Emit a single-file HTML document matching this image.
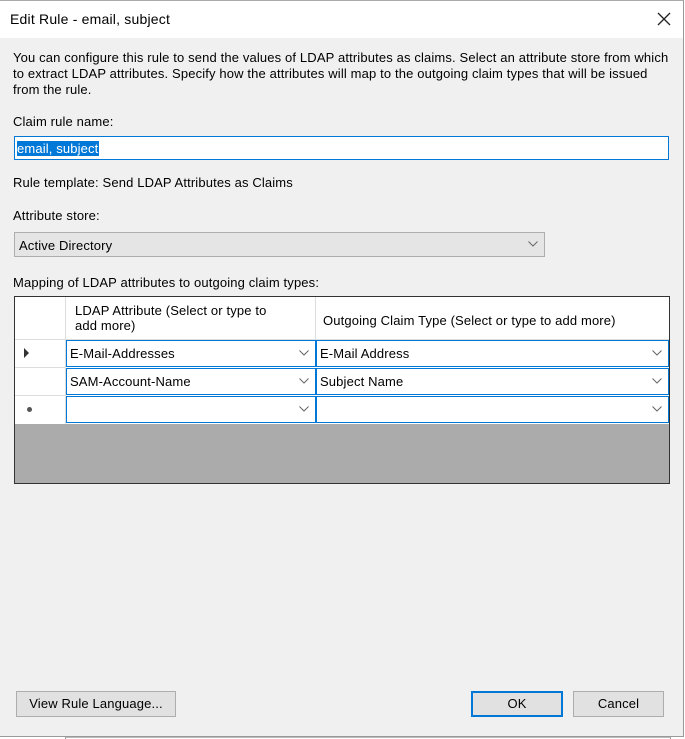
<!DOCTYPE html>
<html><head><style>
body{margin:0;width:685px;height:739px;background:#fff;position:relative;overflow:hidden;font-family:"Liberation Sans",sans-serif;font-size:13px;letter-spacing:0.14px;color:#000}
.a{position:absolute;white-space:nowrap}
.win{position:absolute;left:0;top:0;width:683px;height:735px;background:#f0f0f0;border-right:1px solid #999;border-bottom:1px solid #999;border-top:1px solid #aaa}
.title{position:absolute;left:0;top:0;width:683px;height:37px;background:#fff}
.cell{position:absolute;background:#fff;border:1px solid #0078d7;box-sizing:border-box;height:27px;padding:5px 3px}
.chev{position:absolute;right:6px;top:9px}
.btn{position:absolute;height:26px;background:#e1e1e1;border:1px solid #adadad;box-sizing:border-box;text-align:center;line-height:24px}
</style></head><body>
<div class="win">
<div class="title"></div>
</div>
<div class="a" style="left:10px;top:11px;font-size:14px;letter-spacing:0.2px">Edit Rule - email, subject</div>
<svg class="a" style="left:657px;top:12px" width="14" height="14"><path d="M1 1L13 13M13 1L1 13" stroke="#222" stroke-width="1.3"/></svg>
<div class="a" style="left:13px;top:50px;line-height:16px">You can configure this rule to send the values of LDAP attributes as claims. Select an attribute store from which<br>to extract LDAP attributes. Specify how the attributes will map to the outgoing claim types that will be issued<br>from the rule.</div>
<div class="a" style="left:13px;top:114px">Claim rule name:</div>
<div class="a" style="left:14px;top:136px;width:655px;height:24px;box-sizing:border-box;background:#fff;border:1px solid #0078d7"></div>
<div class="a" style="left:17px;top:141px;height:15px;background:#0078d7;color:#fff;line-height:15px;padding-right:1px">email, subject</div>
<div class="a" style="left:13px;top:175px">Rule template: Send LDAP Attributes as Claims</div>
<div class="a" style="left:13px;top:208px">Attribute store:</div>
<div class="a" style="left:14px;top:232px;width:531px;height:25px;box-sizing:border-box;background:#e5e5e5;border:1px solid #adadad;padding:5px 4px">Active Directory<svg class="chev" style="top:8px" width="10" height="6"><path d="M0.5 0.5L5 5L9.5 0.5" stroke="#666" fill="none"/></svg></div>
<div class="a" style="left:13px;top:275px">Mapping of LDAP attributes to outgoing claim types:</div>
<div class="a" style="left:14px;top:296px;width:656px;height:188px;box-sizing:border-box;border:1px solid #333;background:#ababab"></div>
<div class="a" style="left:15px;top:297px;width:654px;height:127px;background:#fff"></div>
<div class="a" style="left:65px;top:297px;width:1px;height:127px;background:#ddd"></div>
<div class="a" style="left:315px;top:297px;width:1px;height:43px;background:#ddd"></div>
<div class="a" style="left:15px;top:367px;width:50px;height:1px;background:#ddd"></div>
<div class="a" style="left:15px;top:395px;width:50px;height:1px;background:#ddd"></div>
<div class="a" style="left:15px;top:339px;width:654px;height:1px;background:#ddd"></div>
<div class="a" style="left:75px;top:303px;line-height:15px">LDAP Attribute (Select or type to<br>add more)</div>
<div class="a" style="left:323px;top:313px">Outgoing Claim Type (Select or type to add more)</div>
<svg class="a" style="left:24px;top:348px" width="6" height="10"><path d="M0 0L5 5L0 10Z" fill="#333"/></svg>
<div class="a" style="left:27px;top:407px;width:5px;height:5px;border-radius:50%;background:#555"></div>
<div class="cell" style="left:66px;top:340px;width:250px">E-Mail-Addresses<svg class="chev" width="10" height="6"><path d="M0.5 0.5L5 5L9.5 0.5" stroke="#666" fill="none"/></svg></div>
<div class="cell" style="left:316px;top:340px;width:353px">E-Mail Address<svg class="chev" width="10" height="6"><path d="M0.5 0.5L5 5L9.5 0.5" stroke="#666" fill="none"/></svg></div>
<div class="cell" style="left:66px;top:368px;width:250px">SAM-Account-Name<svg class="chev" width="10" height="6"><path d="M0.5 0.5L5 5L9.5 0.5" stroke="#666" fill="none"/></svg></div>
<div class="cell" style="left:316px;top:368px;width:353px">Subject Name<svg class="chev" width="10" height="6"><path d="M0.5 0.5L5 5L9.5 0.5" stroke="#666" fill="none"/></svg></div>
<div class="cell" style="left:66px;top:396px;width:250px"><svg class="chev" width="10" height="6"><path d="M0.5 0.5L5 5L9.5 0.5" stroke="#666" fill="none"/></svg></div>
<div class="cell" style="left:316px;top:396px;width:353px"><svg class="chev" width="10" height="6"><path d="M0.5 0.5L5 5L9.5 0.5" stroke="#666" fill="none"/></svg></div>
<div class="btn" style="left:16px;top:691px;width:160px">View Rule Language...</div>
<div class="btn" style="left:471px;top:691px;width:92px;border:2px solid #0078d7;line-height:22px">OK</div>
<div class="btn" style="left:573px;top:691px;width:91px">Cancel</div>
<div class="a" style="left:65px;top:737px;width:606px;height:2px;border-left:1px solid #999;border-right:1px solid #999;border-top:1px solid #bbb;box-sizing:border-box"></div>
</body></html>
